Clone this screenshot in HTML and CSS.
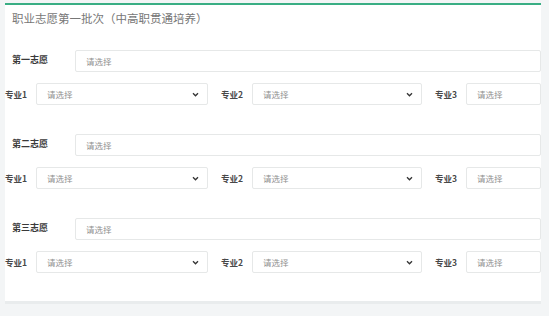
FILE: index.html
```html
<!DOCTYPE html>
<html lang="zh-CN">
<head>
    <meta charset="UTF-8">
    <meta name="viewport" content="width=device-width, initial-scale=1.0">
    <title>职业志愿</title>
    <link rel="stylesheet" href="styles.css">
</head>
<body>
    <div class="panel">
        <div class="panel-title">职业志愿第一批次（中高职贯通培养）</div>

        <div class="choice">
            <div class="choice-row">
                <span class="choice-label">第一志愿</span>
                <div class="field wide">请选择</div>
            </div>
            <div class="major-row">
                <span class="major-label">专业1</span>
                <div class="field select s1">请选择<svg class="arrow" viewBox="0 0 8 6"><polyline points="1,1.5 4,4.5 7,1.5"/></svg></div>
                <span class="major-label">专业2</span>
                <div class="field select s2">请选择<svg class="arrow" viewBox="0 0 8 6"><polyline points="1,1.5 4,4.5 7,1.5"/></svg></div>
                <span class="major-label">专业3</span>
                <div class="field last">请选择</div>
            </div>
        </div>

        <div class="choice">
            <div class="choice-row">
                <span class="choice-label">第二志愿</span>
                <div class="field wide">请选择</div>
            </div>
            <div class="major-row">
                <span class="major-label">专业1</span>
                <div class="field select s1">请选择<svg class="arrow" viewBox="0 0 8 6"><polyline points="1,1.5 4,4.5 7,1.5"/></svg></div>
                <span class="major-label">专业2</span>
                <div class="field select s2">请选择<svg class="arrow" viewBox="0 0 8 6"><polyline points="1,1.5 4,4.5 7,1.5"/></svg></div>
                <span class="major-label">专业3</span>
                <div class="field last">请选择</div>
            </div>
        </div>

        <div class="choice">
            <div class="choice-row">
                <span class="choice-label">第三志愿</span>
                <div class="field wide">请选择</div>
            </div>
            <div class="major-row">
                <span class="major-label">专业1</span>
                <div class="field select s1">请选择<svg class="arrow" viewBox="0 0 8 6"><polyline points="1,1.5 4,4.5 7,1.5"/></svg></div>
                <span class="major-label">专业2</span>
                <div class="field select s2">请选择<svg class="arrow" viewBox="0 0 8 6"><polyline points="1,1.5 4,4.5 7,1.5"/></svg></div>
                <span class="major-label">专业3</span>
                <div class="field last">请选择</div>
            </div>
        </div>
    </div>
</body>
</html>
```

FILE: styles.css
```css
body {
    margin: 0;
    background: #f3f5f6;
    font-family: "Noto Sans CJK SC", "Liberation Sans", sans-serif;
    width: 549px;
    height: 316px;
    overflow: hidden;
}
.panel {
    margin: 3px 8px 0 5px;
    background: #fff;
    border-top: 2px solid #3aae84;
    padding: 0 0 28px 0;
    box-shadow: 0 3px 0 #e9eced;
}
.panel-title {
    padding: 4px 0 0 7px;
    height: 45px;
    box-sizing: border-box;
    font-size: 11.5px;
    line-height: 18px;
    color: #777;
}
.choice {
    margin-bottom: 29px;
}
.choice:last-child {
    margin-bottom: 0;
}
.choice-row {
    display: flex;
    align-items: center;
    height: 22px;
    margin-bottom: 11px;
}
.choice-label {
    width: 63px;
    flex-shrink: 0;
    padding-left: 7px;
    font-size: 9px;
    font-weight: bold;
    color: #3a3a3a;
    margin-top: -4px;
}
.field {
    height: 22px;
    box-sizing: border-box;
    border: 1px solid #e6e8e8;
    border-radius: 2px;
    padding-left: 10px;
    font-size: 8.5px;
    line-height: 20px;
    color: #909090;
    background: #fff;
    flex-shrink: 0;
}
.wide {
    flex: 1;
}
.major-row {
    display: flex;
    align-items: center;
    height: 22px;
}
.major-label {
    font-size: 8.5px;
    font-weight: bold;
    color: #484848;
    width: 31px;
    flex-shrink: 0;
}
.major-label + .field {
    margin-right: 13px;
}
.select {
    position: relative;
}
.s1 {
    width: 172px;
}
.s2 {
    width: 170px;
}
.last {
    flex: 1;
    margin-right: 0 !important;
}
.arrow {
    position: absolute;
    right: 8px;
    top: 8px;
    width: 7px;
    height: 5px;
    fill: none;
    stroke: #333;
    stroke-width: 1.6;
}
```
